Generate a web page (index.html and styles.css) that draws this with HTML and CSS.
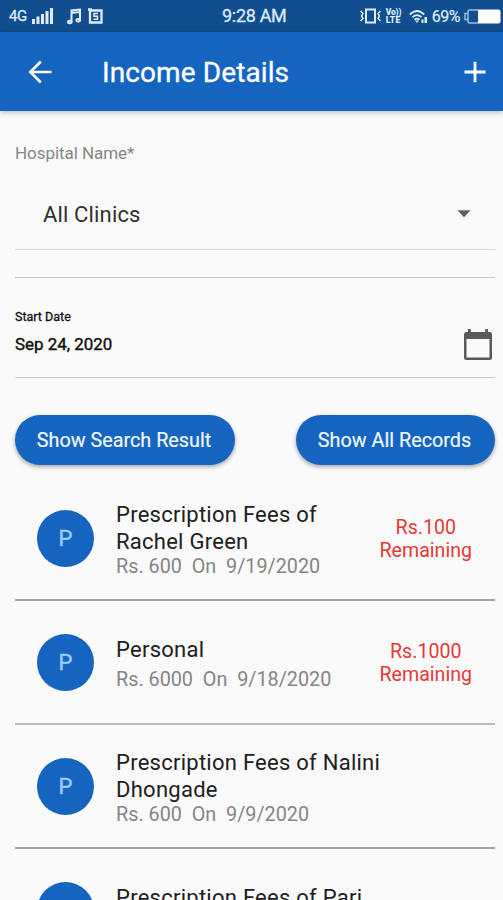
FILE: index.html
```html
<!DOCTYPE html>
<html lang="en">
<head>
<meta charset="utf-8">
<title>Income Details</title>
<link rel="stylesheet" href="styles.css">
</head>
<body>
<div class="screen">
  <div class="status">
    <div class="status-left">
      <span class="network">4G</span>
      <svg class="signal" width="21" height="17" viewBox="0 0 21 17" fill="#dfeafa"><path d="M0 11h3v5H0zM4.500 8.500h3V16h-3zM9 6h3v10H9zM13.500 3h3v13h-3zM18 0h3v16h-3z"/></svg>
      <svg class="music" width="15" height="17" viewBox="0 0 15 17" fill="none" stroke="#dfeafa" stroke-width="2"><path d="M4.500 14V2.500L13 1.500V12M4.500 5 13 4"/><ellipse cx="2.800" cy="14" rx="1.800" ry="1.200"/><ellipse cx="11.200" cy="12.300" rx="1.800" ry="1.200"/></svg>
      <svg width="15" height="16" viewBox="0 0 15 16" fill="none" stroke="#dfeafa"><path stroke-width="2.300" d="M2 2.500h11.500v12H2zM0 1.500h4"/><path stroke-width="1.500" d="M10 5.500H6v2.700h3.500v3H5.500"/></svg>
    </div>
    <span class="clock">9:28 AM</span>
    <div class="status-right">
      <svg width="21" height="16" viewBox="0 0 21 16" fill="none" stroke="#dfeafa"><path stroke-width="2" d="M6 1.500h9v13H6z"/><path stroke-width="1.500" d="M.5 3 3 5.500 1.500 8 3 10.500.5 13M20.500 3 18 5.500 19.500 8 18 10.500l2.500 2.500"/></svg>
      <span class="volte"><span>Vo))</span><span class="lte">LTE</span></span>
      <svg class="wifi" width="19" height="15" viewBox="0 0 19 15" fill="none" stroke="#dfeafa" stroke-width="1.800"><path d="M.8 5.500Q8-1.500 15.200 5.500M3.500 8.200q4.500-4.200 9 0M5.500 10.700q2.500-2.200 5 0"/><path fill="#dfeafa" stroke="none" d="m8 14-2-2.500h4zM12.500 10.500h2V14h-2zM15.500 8H18v6h-2.500z"/></svg>
      <span class="percent">69%</span>
      <svg class="battery" width="37" height="15" viewBox="0 0 37 15"><path fill="none" stroke="#9fbde2" stroke-width="1.500" d="M14 1H5.500Q4 1 4 2.500v10Q4 14 5.500 14H14M3.500 4.500H1v6h2.500"/><path fill="#fff" d="M14 .5h20.500Q36.500.5 36.500 2.500v10q0 2-2 2H14z"/></svg>
    </div>
  </div>
  <header class="appbar">
    <svg class="back" width="24" height="24" viewBox="0 0 24 24" fill="none" stroke="#fff" stroke-width="2.600"><path d="M23.500 12H2.500M12.800 1.500 2.300 12l10.500 10.500"/></svg>
    <h1>Income Details</h1>
    <svg class="add" width="22" height="22" viewBox="0 0 22 22" fill="none" stroke="#fff" stroke-width="2.800"><path d="M11 .8v20.400M.5 11h21"/></svg>
  </header>
  <main>
    <label class="label">Hospital Name*</label>
    <div class="select">
      <span>All Clinics</span>
      <svg width="14" height="8" viewBox="0 0 14 8" fill="#616161"><path d="M.3.300h13.400L7 7.300z"/></svg>
    </div>
    <div class="gap"></div>
    <div class="date">
      <div class="date-text"><span class="date-label">Start Date</span><span class="date-value">Sep 24, 2020</span></div>
      <svg width="30" height="33" viewBox="0 0 30 33"><path fill="#5a5a5a" d="M5 1h2.800v3h14.400V1H25v3h1.500Q29 4 29 6.500v23Q29 32 26.500 32h-23Q1 32 1 29.500v-23Q1 4 3.500 4H5zM3.500 11v18.500h23V11z"/></svg>
    </div>
    <div class="actions">
      <button class="btn search">Show Search Result</button>
      <button class="btn all">Show All Records</button>
    </div>
    <div class="list">
      <div class="row">
        <div class="avatar">P</div>
        <div class="info"><div class="name">Prescription Fees of<br>Rachel Green</div><div class="sub">Rs. 600&nbsp; On&nbsp; 9/19/2020</div></div>
        <div class="due">Rs.100<br>Remaining</div>
      </div>
      <div class="row thick">
        <div class="avatar">P</div>
        <div class="info single"><div class="name">Personal</div><div class="sub">Rs. 6000&nbsp; On&nbsp; 9/18/2020</div></div>
        <div class="due">Rs.1000<br>Remaining</div>
      </div>
      <div class="row">
        <div class="avatar">P</div>
        <div class="info"><div class="name">Prescription Fees of Nalini<br>Dhongade</div><div class="sub">Rs. 600&nbsp; On&nbsp; 9/9/2020</div></div>
      </div>
      <div class="row">
        <div class="avatar">P</div>
        <div class="info single"><div class="name">Prescription Fees of Pari</div></div>
      </div>
    </div>
  </main>
</div>
</body>
</html>
```
FILE: styles.css
```css
* { box-sizing: border-box; }
body { margin: 0; font-family: Roboto, sans-serif; background: #fafafa; }
.screen { width: 503px; height: 900px; overflow: hidden; display: flex; flex-direction: column; }
svg { display: block; flex: none; }
.status { height: 32px; flex: none; background: #114e8f; color: #dfeafa; display: flex; align-items: center; padding: 0 2px 0 9px; }
.status-left, .status-right { display: flex; align-items: center; }
.status-left { width: 213px; }
.network { font-size: 15px; width: 23px; letter-spacing: -.5px; -webkit-text-stroke: .3px; }
.music { margin: 0 6px 0 14px; }
.clock { font-size: 18px; line-height: 32px; letter-spacing: -.3px; white-space: nowrap; -webkit-text-stroke: .3px; }
.status-right { margin-left: auto; }
.volte { display: flex; flex-direction: column; width: 16px; margin: 0 7px 0 5px; font-size: 8.500px; line-height: 8px; font-weight: 900; letter-spacing: -.2px; }
.lte { letter-spacing: .3px; }
.percent { font-size: 16px; margin: 0 4px 0 4px; letter-spacing: -.5px; -webkit-text-stroke: .2px; }
.appbar { height: 79px; flex: none; background: #1565c0; color: #fff; display: flex; align-items: center; padding: 1px 17px 0 28px; box-shadow: 0 1px 6px rgba(0, 0, 0, .3); }
.appbar h1 { margin: 0 auto 0 50px; padding-top: 2px; font-size: 28px; font-weight: 400; line-height: 40px; letter-spacing: .1px; -webkit-text-stroke: .3px; }
main { padding: 31px 8px 0 15px; }
.label { display: block; font-size: 17px; line-height: 22px; color: #858585; letter-spacing: -.05px; }
.select { height: 86px; border-bottom: 1px solid #d8d8d8; display: flex; align-items: center; justify-content: space-between; padding: 14px 24px 0 28px; font-size: 22px; letter-spacing: .15px; color: #303030; }
.select span { padding-top: 2px; }
.gap { height: 28px; border-bottom: 1px solid #c9c9c9; }
.date { height: 100px; border-bottom: 1px solid #c9c9c9; display: flex; align-items: center; justify-content: space-between; padding: 34px 2px 0 0; }
.date-text { display: flex; flex-direction: column; align-self: flex-start; color: #111; }
.date-label { font-size: 12.500px; line-height: 10px; -webkit-text-stroke: .3px; }
.date-value { font-size: 16.900px; line-height: 22px; margin-top: 11px; -webkit-text-stroke: .4px; }
.actions { display: flex; justify-content: space-between; padding-top: 37px; }
.btn { height: 50px; border: 0; border-radius: 25px; padding: 0 2px 0 0; background: #1565c0; color: #f0f6ff; font: 400 19.800px Roboto, sans-serif; box-shadow: 0 2px 4px rgba(0, 0, 0, .35); white-space: nowrap; -webkit-text-stroke: .2px; }
.search { width: 220px; }
.all { width: 199px; }
.list { margin-top: 12px; }
.row { height: 124px; border-bottom: 2px solid #a5a5a5; display: flex; align-items: center; padding-left: 22px; }
.thick { border-bottom-color: #b9b9b9; }
.avatar { width: 57px; height: 57px; border-radius: 50%; background: #1565c0; color: #9fcbfa; font-size: 22px; display: flex; align-items: center; justify-content: center; flex: none; padding-top: 1px; -webkit-text-stroke: .4px; }
.info { align-self: flex-start; margin-left: 22px; padding-top: 24px; white-space: nowrap; }
.info.single { padding-top: 35px; }
.name { font-size: 22px; line-height: 27px; letter-spacing: .26px; color: #202020; }
.sub { font-size: 19.800px; line-height: 24px; color: #858585; }
.single .sub { margin-top: 5px; }
.due { margin: 1px 23px 0 auto; font-size: 19.600px; line-height: 23px; text-align: center; color: #e53935; }
```
